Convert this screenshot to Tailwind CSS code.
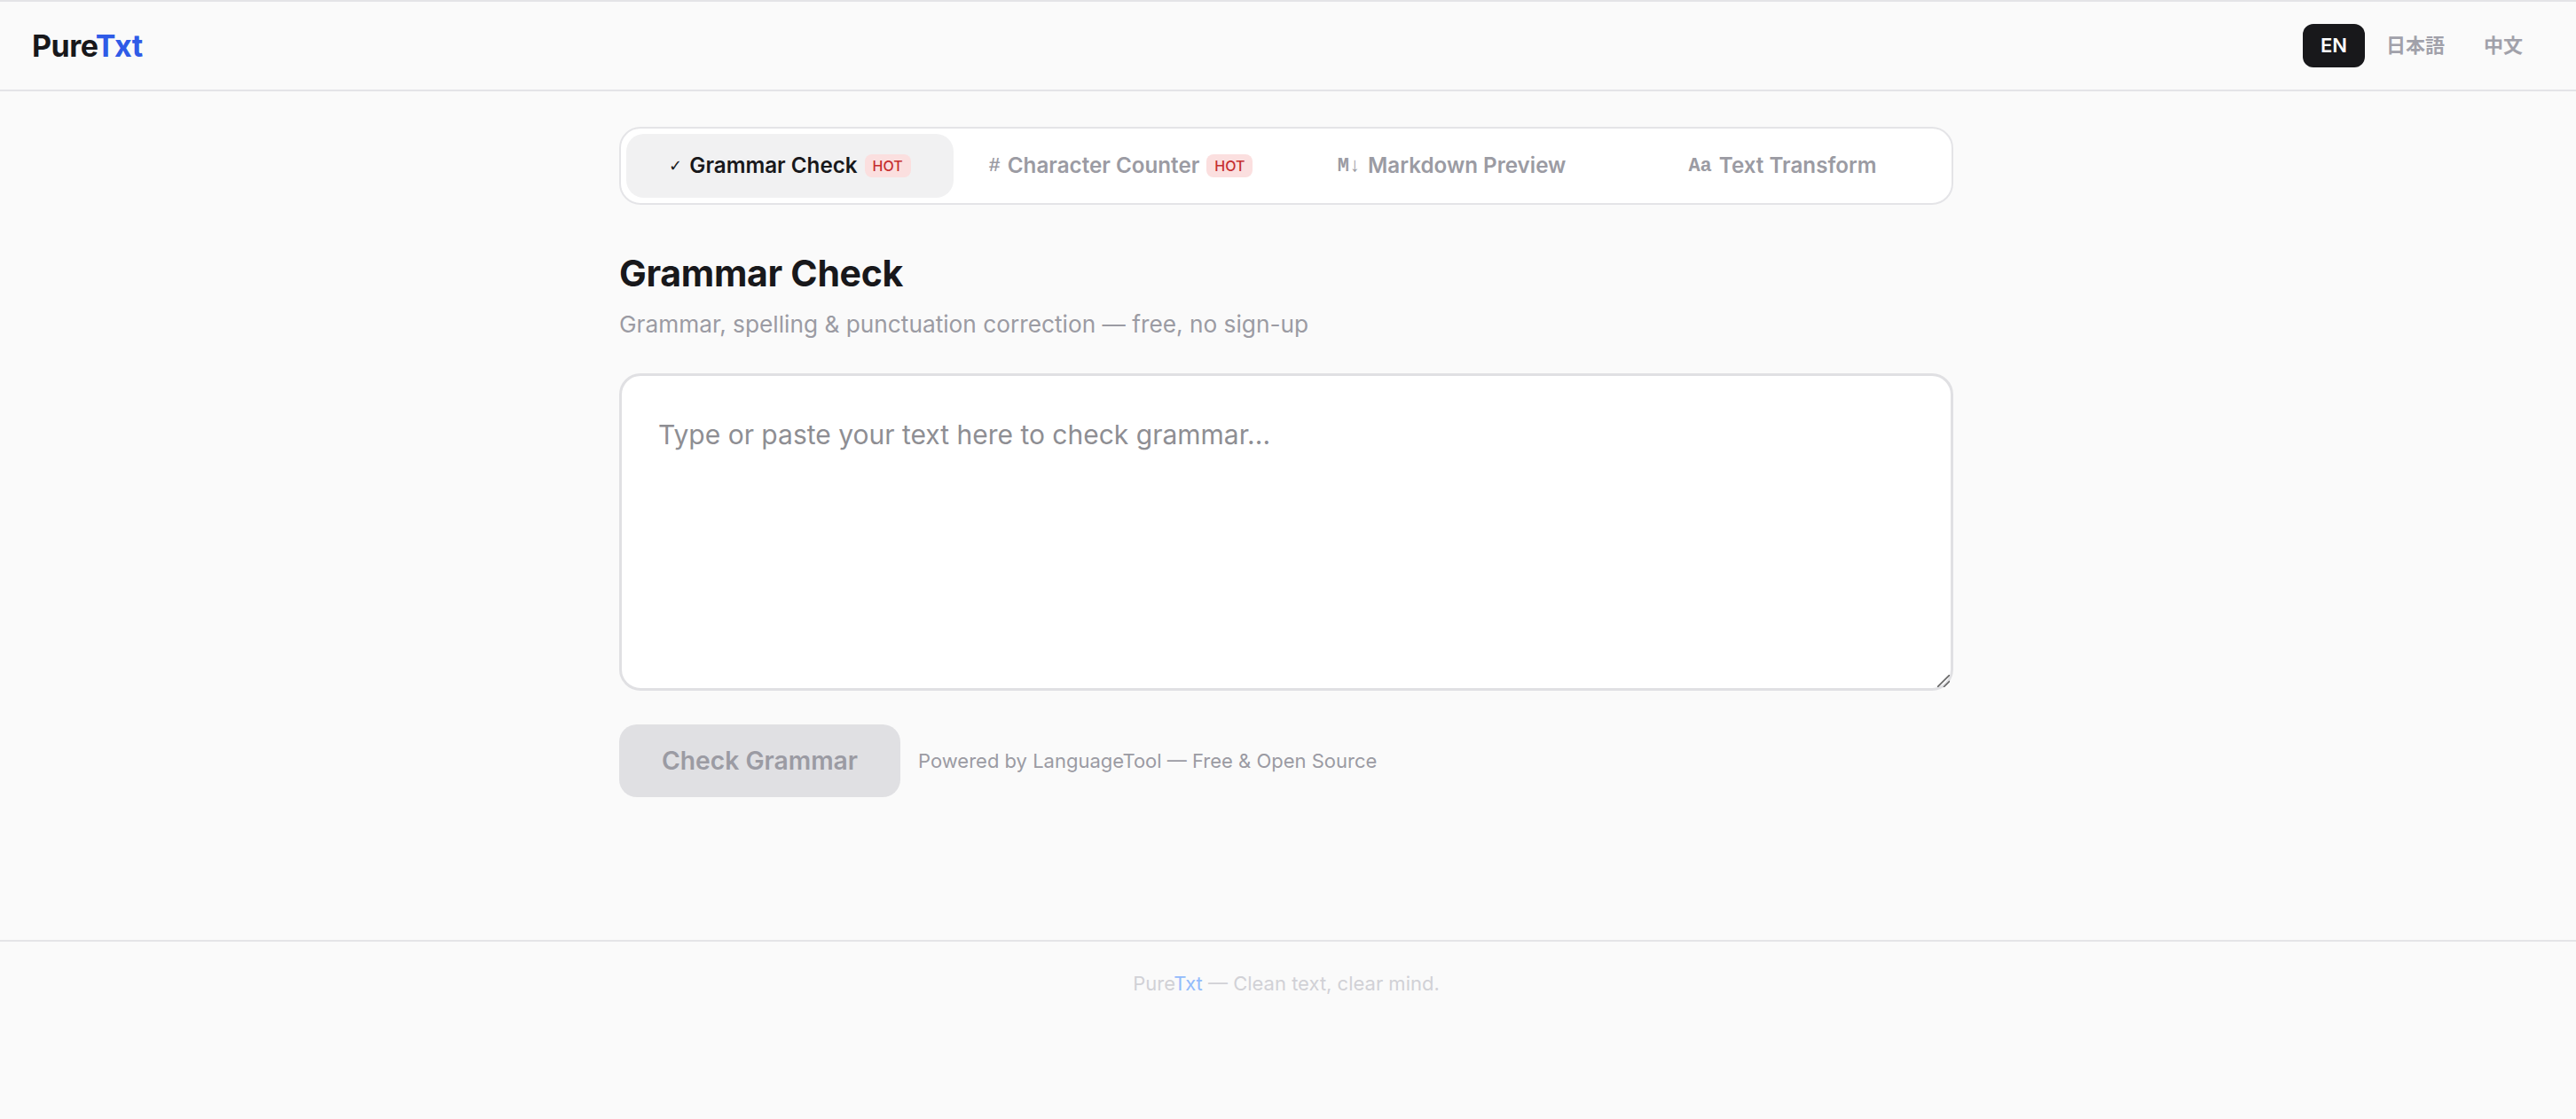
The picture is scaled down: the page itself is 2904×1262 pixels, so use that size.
<!DOCTYPE html>
<html lang="en">
<head>
<meta charset="utf-8">
<title>PureTxt</title>
<script src="https://cdn.jsdelivr.net/npm/@tailwindcss/browser@4"></script>
</head>
<body class="bg-[#fafafa] font-[Inter,'Noto_Sans_CJK_JP',sans-serif] text-[#18181b]">
<div class="flex min-h-[1262px] flex-col">
  <header class="flex h-[103px] items-center justify-between border-y-2 border-[#e4e4e7] pl-9 pr-10">
    <div class="text-[34px] leading-none font-bold tracking-[-0.5px]">Pure<span class="text-[#2f5be7]">Txt</span></div>
    <nav class="flex gap-1">
      <button class="rounded-xl bg-[#18181b] px-5 py-2.5 text-[22px] leading-[29px] font-semibold text-white">EN</button>
      <button class="rounded-xl px-5 py-2.5 text-[22px] leading-[29px] font-semibold text-[#a1a1aa]">日本語</button>
      <button class="rounded-xl px-5 py-2.5 text-[22px] leading-[29px] font-semibold text-[#a1a1aa]">中文</button>
    </nav>
  </header>
  <div class="w-[2900px]">
  <main class="mx-auto w-[1504px] pt-10">
    <div class="flex h-[88px] gap-1 rounded-3xl border-2 border-[#e4e4e7] bg-white p-1.5">
      <button class="flex flex-1 items-center justify-center gap-2 rounded-[20px] bg-[#f1f1f2] text-[24.2px] font-semibold text-[#18181b]"><span class="translate-y-[1px] font-['Liberation_Mono'] text-[18px] leading-none font-normal">✓</span>Grammar Check<span class="rounded-lg bg-[#fbdfdf] px-[9px] py-0.5 text-[16px] leading-[22px] font-medium text-[#c62f2f]">HOT</span></button>
      <button class="flex flex-1 items-center justify-center gap-2 rounded-[20px] text-[24.2px] font-semibold text-[#9b9ba3]"><span class="translate-y-[1px] font-['Liberation_Mono'] text-[22px] leading-none font-bold">#</span>Character Counter<span class="rounded-lg bg-[#fbdfdf] px-[9px] py-0.5 text-[16px] leading-[22px] font-medium text-[#c62f2f]">HOT</span></button>
      <button class="flex flex-1 items-center justify-center gap-2 rounded-[20px] text-[24.2px] font-semibold text-[#9b9ba3]"><span class="translate-y-[1px] font-['Liberation_Mono'] text-[22px] leading-none font-bold">M↓</span>Markdown Preview</button>
      <button class="flex flex-1 items-center justify-center gap-2 rounded-[20px] text-[24.2px] font-semibold text-[#9b9ba3]"><span class="translate-y-[1px] font-['Liberation_Mono'] text-[22px] leading-none font-bold">Aa</span>Text Transform</button>
    </div>
    <h1 class="mt-[53px] text-[41px] leading-[48px] font-bold tracking-[-0.3px] text-[#18181b]">Grammar Check</h1>
    <p class="mt-[13px] text-[26.25px] leading-[42px] text-[#9b9ba3]">Grammar, spelling &amp; punctuation correction — free, no sign-up</p>
    <div class="relative mt-[34px]">
      <textarea class="block h-[358px] w-full resize-none rounded-3xl border-[3px] border-[#e0e0e3] bg-white px-[41px] py-[42px] text-[30px] leading-[48px] outline-none placeholder:text-[#8e8e93]" placeholder="Type or paste your text here to check grammar..."></textarea>
      <svg class="absolute right-1 bottom-1 size-[14px]" viewBox="0 0 14 14" fill="none" stroke="#666" stroke-width="1.6"><path d="M0 14 14 0M7 14l7-7"/></svg>
    </div>
    <div class="mt-[38px] flex items-center gap-5">
      <button class="h-[82px] w-[317px] rounded-[20px] bg-[#e0e0e3] text-[28.25px] font-semibold text-[#9b9ba3]">Check Grammar</button>
      <span class="text-[22px] text-[#9b9ba3]">Powered by LanguageTool — Free &amp; Open Source</span>
    </div>
  </main>
  </div>
  <footer class="mt-auto h-[202px] border-t-2 border-[#e4e4e7] pt-[31px] pr-1 text-center text-[22px] leading-[32px] text-[#d1d1d6]">Pure<span class="text-[#93bbfb]">Txt</span> — Clean text, clear mind.</footer>
</div>
</body>
</html>
